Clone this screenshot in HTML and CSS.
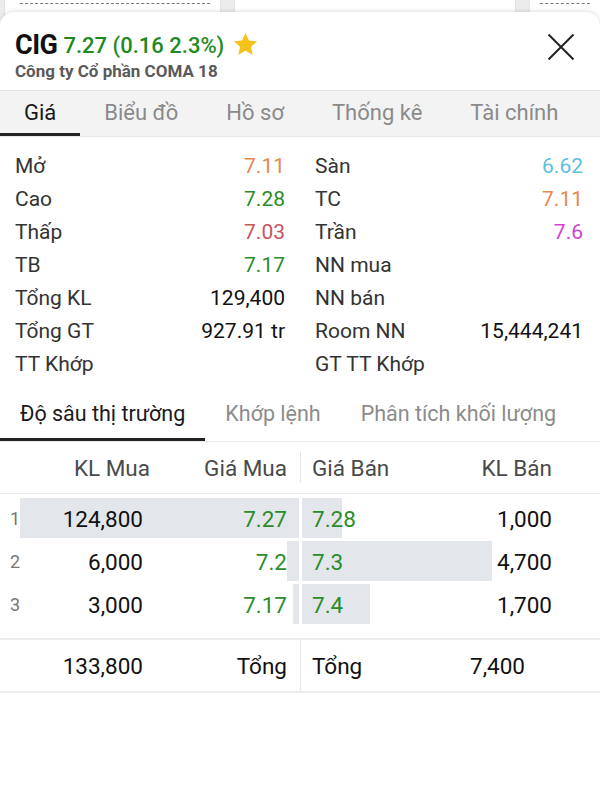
FILE: index.html
```html
<!DOCTYPE html>
<html lang="vi">
  <head>
    <meta charset="UTF-8" />
    <meta name="viewport" content="width=device-width, initial-scale=1.0" />
    <title>CIG</title>
    <link rel="stylesheet" href="styles.css">
  </head>
  <body>
    <div class="backdrop">
      <div class="peek peek--a"><span class="peek__dash"></span></div>
      <div class="peek peek--b"></div>
      <div class="peek peek--c"><span class="peek__dash"></span></div>
    </div>

    <main class="sheet">
      <header class="head">
        <div>
          <div class="head__title">
            <span class="head__sym">CIG</span>
            <span class="head__chg">7.27 (0.16 2.3%)</span>
            <svg class="head__star" viewBox="0 0 24 24" width="27" height="27">
              <path d="M12 1.8l3.1 6.6 7.2.8-5.4 4.9 1.5 7.1L12 17.6l-6.4 3.6 1.5-7.1L1.7 9.2l7.2-.8z" fill="#f6c21c" />
            </svg>
          </div>
          <div class="head__name">Công ty Cổ phần COMA 18</div>
        </div>
        <button class="head__close" aria-label="close">
          <svg viewBox="0 0 28 28" width="28" height="28">
            <path d="M1.5 1.5L26.5 26.5M26.5 1.5L1.5 26.5" stroke="#222" stroke-width="2" fill="none" />
          </svg>
        </button>
      </header>

      <nav class="tabs">
        <span class="tabs__item tabs__item--active">Giá</span>
        <span class="tabs__item">Biểu đồ</span>
        <span class="tabs__item">Hồ sơ</span>
        <span class="tabs__item">Thống kê</span>
        <span class="tabs__item">Tài chính</span>
      </nav>

      <section class="stats">
        <div class="stats__col">
          <div class="stats__row"><span>Mở</span><span class="c-ref">7.11</span></div>
          <div class="stats__row"><span>Cao</span><span class="c-up">7.28</span></div>
          <div class="stats__row"><span>Thấp</span><span class="c-down">7.03</span></div>
          <div class="stats__row"><span>TB</span><span class="c-up">7.17</span></div>
          <div class="stats__row"><span>Tổng KL</span><span class="c-val">129,400</span></div>
          <div class="stats__row"><span>Tổng GT</span><span class="c-val">927.91 tr</span></div>
          <div class="stats__row"><span>TT Khớp</span><span></span></div>
        </div>
        <div class="stats__col stats__col--right">
          <div class="stats__row"><span>Sàn</span><span class="c-floor">6.62</span></div>
          <div class="stats__row"><span>TC</span><span class="c-ref">7.11</span></div>
          <div class="stats__row"><span>Trần</span><span class="c-ceil">7.6</span></div>
          <div class="stats__row"><span>NN mua</span><span></span></div>
          <div class="stats__row"><span>NN bán</span><span></span></div>
          <div class="stats__row"><span>Room NN</span><span class="c-val">15,444,241</span></div>
          <div class="stats__row"><span>GT TT Khớp</span><span></span></div>
        </div>
      </section>

      <nav class="subtabs">
        <span class="subtabs__item subtabs__item--active">Độ sâu thị trường</span>
        <span class="subtabs__item">Khớp lệnh</span>
        <span class="subtabs__item">Phân tích khối lượng</span>
      </nav>

      <section class="depth">
        <div class="depth__head">
          <div class="half half--buy">
            <span class="depth__kl-mua">KL Mua</span>
            <span class="num">Giá Mua</span>
          </div>
          <div class="half half--sell">
            <span>Giá Bán</span>
            <span class="num">KL Bán</span>
          </div>
        </div>

        <div class="depth__rows">
          <div class="depth__row">
            <div class="half half--buy">
              <i class="bar" style="width: 279px"></i>
              <span class="idx">1</span><span class="num">124,800</span><span class="num c-up">7.27</span>
            </div>
            <div class="half half--sell">
              <i class="bar" style="width: 40px"></i>
              <span class="c-up">7.28</span><span class="num">1,000</span>
            </div>
          </div>
          <div class="depth__row">
            <div class="half half--buy">
              <i class="bar" style="width: 12px"></i>
              <span class="idx">2</span><span class="num">6,000</span><span class="num c-up">7.2</span>
            </div>
            <div class="half half--sell">
              <i class="bar" style="width: 190px"></i>
              <span class="c-up">7.3</span><span class="num">4,700</span>
            </div>
          </div>
          <div class="depth__row">
            <div class="half half--buy">
              <i class="bar" style="width: 6px"></i>
              <span class="idx">3</span><span class="num">3,000</span><span class="num c-up">7.17</span>
            </div>
            <div class="half half--sell">
              <i class="bar" style="width: 68px"></i>
              <span class="c-up">7.4</span><span class="num">1,700</span>
            </div>
          </div>
        </div>

        <div class="depth__total">
          <div class="half half--buy">
            <span class="idx"></span><span class="num">133,800</span><span class="num">Tổng</span>
          </div>
          <div class="half half--sell">
            <span>Tổng</span><span class="num">7,400</span>
          </div>
        </div>
      </section>
    </main>
  </body>
</html>
```

FILE: styles.css
```css
* {
  margin: 0;
  padding: 0;
  box-sizing: border-box;
}

:root {
  font-family: Roboto, "Noto Sans", Arial, sans-serif;
  color: #333;
}

body {
  width: 600px;
  height: 800px;
  overflow: hidden;
  background: #ececec;
}

/* cards of the list behind the sheet */
.backdrop {
  display: flex;
  gap: 15px;
  height: 22px;
  padding: 0 0 0 5px;
}

.peek {
  height: 100%;
  background: #fff;
  border-radius: 0 0 10px 10px;
  box-shadow: 0 1px 2px rgba(0, 0, 0, 0.12);
  padding: 3px 10px 0 15px;
}

.peek--a {
  width: 215px;
}

.peek--b {
  width: 280px;
}

.peek--c {
  flex: 1;
  border-radius: 0 0 0 10px;
  padding-left: 10px;
}

.peek__dash {
  display: block;
  border-top: 1px dashed #777;
}

.sheet {
  position: relative;
  margin-top: -10px;
  height: 790px;
  background: #fff;
  border-radius: 14px 14px 0 0;
  box-shadow: 0 -1px 4px rgba(0, 0, 0, 0.12);
}

.head {
  display: flex;
  justify-content: space-between;
  align-items: flex-start;
  padding: 18px 15px 8px 15px;
}

.head__title {
  display: flex;
  align-items: center;
  height: 30px;
  white-space: nowrap;
}

.head__sym {
  font-size: 27px;
  font-weight: 700;
  color: #111;
  letter-spacing: -0.5px;
}

.head__chg {
  margin-left: 6px;
  font-size: 22px;
  font-weight: 500;
  color: #1f8a22;
}

.head__star {
  margin-left: 8px;
  margin-top: -2px;
}

.head__name {
  height: 22px;
  line-height: 22px;
  font-size: 17px;
  font-weight: 700;
  color: #5a5a5a;
}

.head__close {
  border: none;
  background: none;
  margin: 3px 10px 0 0;
}

.tabs {
  display: flex;
  height: 47px;
  background: #f3f3f3;
  border-top: 1px solid #e4e4e4;
  border-bottom: 1px solid #e8e8e8;
}

.tabs__item {
  padding: 0 24px;
  line-height: 43px;
  font-size: 22px;
  color: #8a8a8a;
  border-bottom: 3px solid transparent;
}

.tabs__item--active {
  color: #1a1a1a;
  border-bottom-color: #222;
}

.stats {
  display: grid;
  grid-template-columns: 300px 300px;
  padding: 13px 0 7px;
}

.stats__col {
  padding: 0 15px;
}

.stats__col--right {
  padding-right: 17px;
}

.stats__row {
  display: flex;
  justify-content: space-between;
  height: 33px;
  line-height: 33px;
  font-size: 21px;
  color: #333;
}

.c-val {
  color: #111;
}

.c-up {
  color: #2b8c2b;
}

.c-down {
  color: #c9545c;
}

.c-ref {
  color: #e8874c;
}

.c-floor {
  color: #5cc0dd;
}

.c-ceil {
  color: #d13fd3;
}

.subtabs {
  display: flex;
  height: 54px;
  border-bottom: 1px solid #ebebeb;
}

.subtabs__item {
  padding: 0 20px;
  line-height: 51px;
  font-size: 21.5px;
  color: #8c8c8c;
  border-bottom: 3px solid transparent;
}

.subtabs__item--active {
  color: #1a1a1a;
  border-bottom-color: #222;
}

.depth {
  font-size: 22.5px;
}

.half {
  position: relative;
  width: 300px;
  display: grid;
  align-items: center;
}

.half--buy {
  grid-template-columns: 20px 113px 1fr;
  padding: 0 13px 0 10px;
}

.half--sell {
  grid-template-columns: 1fr auto;
  padding: 0 48px 0 12px;
}

.half > span {
  position: relative;
}

.num {
  text-align: right;
}

.idx {
  font-size: 18px;
  color: #777;
}

.depth__head {
  display: flex;
  height: 52px;
  color: #4a4a4a;
  border-bottom: 1px solid #ebebeb;
}

.depth__head .half--buy {
  grid-template-columns: 140px 1fr;
  padding-right: 13px;
}

.depth__head .half--sell {
  border-left: 1px solid #e6e6e6;
  margin: 10px 0;
  padding-left: 11px;
}

.depth__kl-mua {
  text-align: right;
}

.depth__rows {
  padding: 3px 0 12px;
  border-bottom: 2px solid #ececec;
}

.depth__row {
  display: flex;
  height: 43px;
  color: #111;
}

.bar {
  position: absolute;
  top: 1px;
  bottom: 2px;
  background: #e3e6ea;
}

.half--buy .bar {
  right: 1px;
}

.half--sell .bar {
  left: 2px;
}

.depth__total {
  display: flex;
  height: 53px;
  color: #111;
  border-bottom: 2px solid #ececec;
}

.depth__total .half--sell {
  border-left: 1px solid #e9e9e9;
  padding: 0 75px 0 11px;
}
```
